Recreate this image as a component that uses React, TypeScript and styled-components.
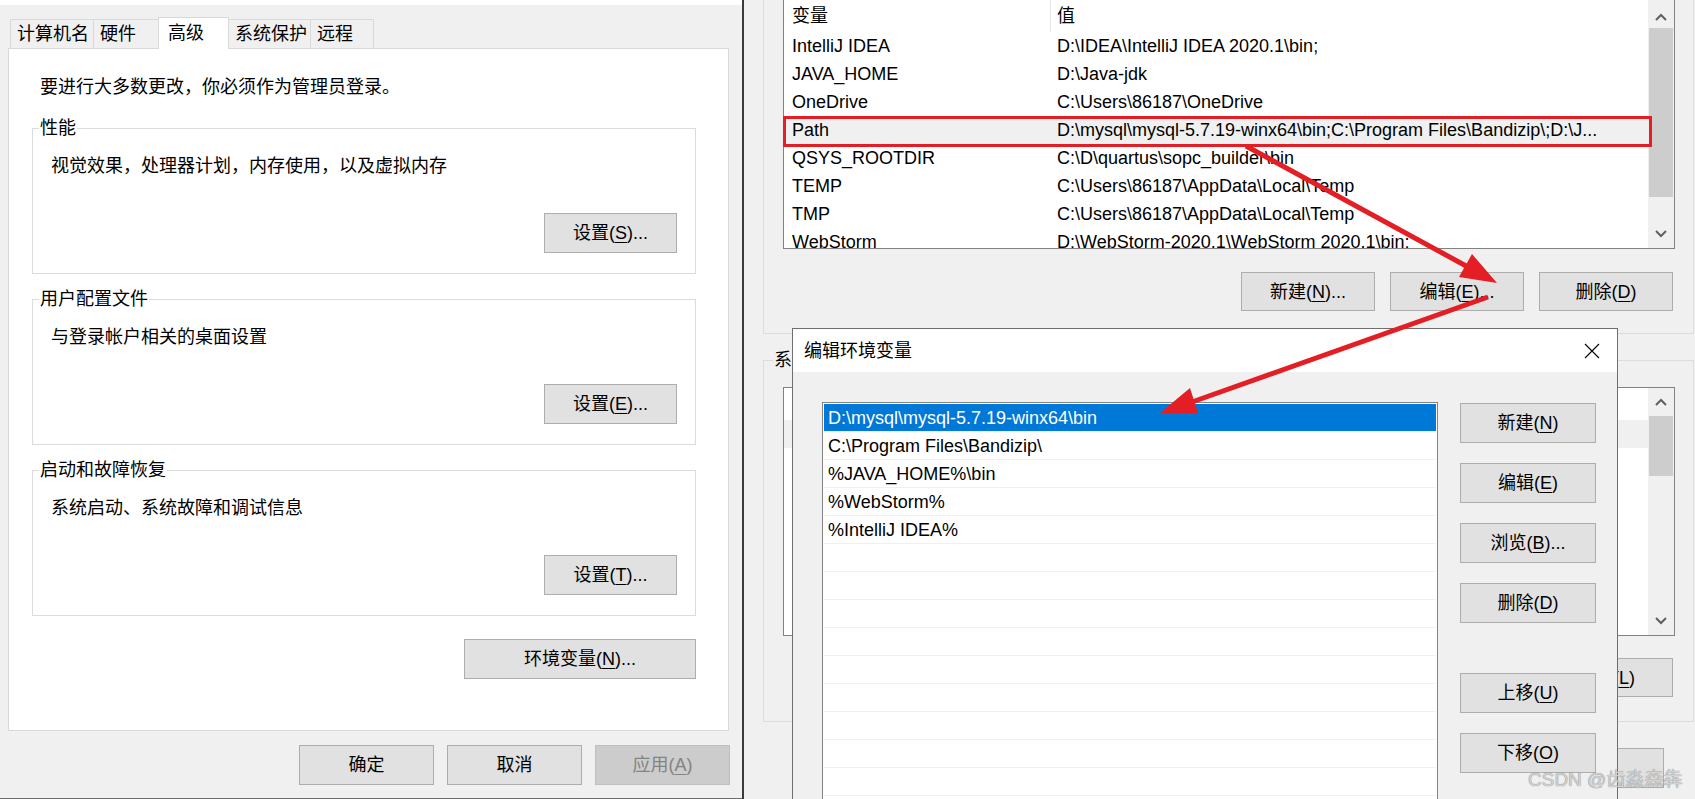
import React from "react";
import styled, { createGlobalStyle } from "styled-components";

const GlobalStyle = createGlobalStyle`
  html, body { margin: 0; padding: 0; }
  body {
    width: 1695px; height: 799px; overflow: hidden; background: #f0f0f0;
    font-family: "Liberation Sans", "Noto Sans CJK SC", sans-serif;
    font-size: 18px; line-height: 24px; color: #000;
  }
  #root { width: 1695px; height: 799px; }
`;

const Screen = styled.div`
  position: relative;
  display: flex;
  width: 1695px;
  height: 799px;
  overflow: hidden;
`;

/* ---------- shared ---------- */
const Btn = styled.button<{ $w?: number; $h?: number; $disabled?: boolean; $gapTop?: number }>`
  box-sizing: border-box;
  flex: none;
  width: ${(p) => p.$w ?? 133}px;
  height: ${(p) => p.$h ?? 40}px;
  margin: ${(p) => (p.$gapTop ? `${p.$gapTop}px 0 0 0` : "0")};
  padding: 0;
  font: inherit;
  line-height: 24px;
  color: ${(p) => (p.$disabled ? "#838383" : "#000")};
  background: ${(p) => (p.$disabled ? "#cccccc" : "#e1e1e1")};
  border: 1px solid ${(p) => (p.$disabled ? "#bfbfbf" : "#adadad")};
  border-radius: 0;
  display: flex;
  align-items: center;
  justify-content: center;
  white-space: nowrap;
  u { text-underline-offset: 3px; text-decoration-thickness: 1px; }
`;

const Legend = styled.div<{ $bg: string; $left: number }>`
  align-self: flex-start;
  margin: -13px 0 0 ${(p) => p.$left}px;
  padding: 0 1px;
  background: ${(p) => p.$bg};
  line-height: 24px;
  white-space: nowrap;
`;

/* ---------- left window ---------- */
const LeftWindow = styled.section`
  box-sizing: border-box;
  width: 742px;
  height: 799px;
  flex: none;
  background: #f0f0f0;
  border-top: 5px solid #ffffff;
  border-bottom: 1px solid #6d6d6d;
  display: flex;
  flex-direction: column;
`;

const Divider = styled.div`
  width: 2px;
  flex: none;
  background: #3a3a3a;
`;

const TabStrip = styled.div`
  display: flex;
  align-items: flex-end;
  height: 31px;
  margin-top: 12px;
  padding-left: 10px;
`;

const Tab = styled.div<{ $w: number; $active?: boolean }>`
  box-sizing: border-box;
  width: ${(p) => p.$w}px;
  height: ${(p) => (p.$active ? 32 : 29)}px;
  margin: 0 -1px ${(p) => (p.$active ? -1 : 0)}px 0;
  padding-left: ${(p) => (p.$active ? 9 : 6)}px;
  padding-bottom: ${(p) => (p.$active ? 1 : 0)}px;
  position: relative;
  z-index: ${(p) => (p.$active ? 2 : 1)};
  border: 1px solid #d9d9d9;
  border-bottom: none;
  background: ${(p) => (p.$active ? "#ffffff" : "#f0f0f0")};
  display: flex;
  align-items: center;
  white-space: nowrap;
`;

const Panel = styled.div`
  box-sizing: border-box;
  margin-left: 8px;
  width: 721px;
  height: 683px;
  flex: none;
  border: 1px solid #d9d9d9;
  background: #ffffff;
  padding: 0 32px 0 23px;
  display: flex;
  flex-direction: column;
`;

const Intro = styled.div`
  margin: 26px 0 0 8px;
  line-height: 24px;
`;

const SettingGroup = styled.div<{ $first?: boolean }>`
  box-sizing: border-box;
  height: 146px;
  margin-top: ${(p) => (p.$first ? 29 : 25)}px;
  border: 1px solid #dcdcdc;
  padding: 0 18px 20px 18px;
  display: flex;
  flex-direction: column;
`;

const GroupDesc = styled.div`
  margin-top: 14px;
  line-height: 24px;
`;

const GroupAction = styled.div`
  margin-top: auto;
  align-self: flex-end;
`;

const EnvRow = styled.div`
  margin-top: 23px;
  display: flex;
  justify-content: flex-end;
`;

const LeftFooter = styled.div`
  margin-top: 14px;
  display: flex;
  justify-content: flex-end;
  gap: 13px;
  padding-right: 12px;
`;

/* ---------- right window ---------- */
const RightWindow = styled.section`
  flex: 1;
  min-width: 0;
  background: #f0f0f0;
  display: flex;
  flex-direction: column;
  padding: 0 1px 0 19px;
`;

const VarGroup = styled.div<{ $top: number; $pt: number; $pb: number }>`
  box-sizing: border-box;
  margin-top: ${(p) => p.$top}px;
  border: 1px solid #dcdcdc;
  padding: ${(p) => p.$pt}px 18px ${(p) => p.$pb}px 19px;
  display: flex;
  flex-direction: column;
`;

const ListView = styled.div<{ $h: number; $mt?: number }>`
  box-sizing: border-box;
  height: ${(p) => p.$h}px;
  margin-top: ${(p) => p.$mt ?? 0}px;
  border: 1px solid #828282;
  background: #ffffff;
  display: flex;
  overflow: hidden;
`;

const ListBody = styled.div`
  flex: 1;
  min-width: 0;
  display: flex;
  flex-direction: column;
`;

const ListRow = styled.div<{ $h?: number; $hl?: boolean }>`
  display: flex;
  flex: none;
  height: ${(p) => p.$h ?? 28}px;
  background: ${(p) => (p.$hl ? "#f0f0f0" : "transparent")};
  line-height: ${(p) => p.$h ?? 28}px;
  white-space: nowrap;
`;

const NameCell = styled.div<{ $head?: boolean }>`
  box-sizing: border-box;
  width: 267px;
  flex: none;
  padding-left: 8px;
  border-right: 1px solid ${(p) => (p.$head ? "#e5e5e5" : "transparent")};
  overflow: hidden;
`;

const ValueCell = styled.div`
  flex: 1;
  min-width: 0;
  padding-left: 6px;
  overflow: hidden;
`;

const ScrollBar = styled.div`
  width: 26px;
  flex: none;
  background: #f0f0f0;
  display: flex;
  flex-direction: column;
`;

const ScrollArrow = styled.div<{ $pt?: number }>`
  height: 28px;
  flex: none;
  display: flex;
  justify-content: center;
  align-items: center;
  padding-top: ${(p) => p.$pt ?? 0}px;
  box-sizing: border-box;
`;

const Thumb = styled.div<{ $h: number }>`
  height: ${(p) => p.$h}px;
  margin: 0 1px;
  flex: none;
  background: #cdcdcd;
`;

const Track = styled.div`
  flex: 1;
`;

const ButtonRow = styled.div<{ $mt: number; $pr: number }>`
  display: flex;
  justify-content: flex-end;
  gap: 15px;
  margin-top: ${(p) => p.$mt}px;
  padding-right: ${(p) => p.$pr}px;
`;

/* ---------- overlays ---------- */
const RedFrame = styled.div`
  position: absolute;
  left: 783px;
  top: 116px;
  width: 869px;
  height: 31px;
  box-sizing: border-box;
  border: 3px solid #e31e24;
  z-index: 5;
`;

const EditDialog = styled.section`
  position: absolute;
  left: 792px;
  top: 328px;
  width: 826px;
  height: 490px;
  box-sizing: border-box;
  border: 1px solid #6e6e6e;
  background: #f0f0f0;
  display: flex;
  flex-direction: column;
  z-index: 10;
`;

const TitleBar = styled.div`
  height: 43px;
  flex: none;
  background: #ffffff;
  display: flex;
  align-items: center;
  justify-content: space-between;
  padding: 0 17px 0 11px;
`;

const DialogBody = styled.div`
  display: flex;
  gap: 22px;
  padding: 30px 21px 0 29px;
`;

const PathList = styled.div`
  box-sizing: border-box;
  width: 616px;
  height: 420px;
  flex: none;
  border: 1px solid #828282;
  background: #ffffff;
  padding: 1px;
  display: flex;
  flex-direction: column;
`;

const PathRow = styled.div<{ $sel?: boolean }>`
  height: 28px;
  flex: none;
  box-sizing: border-box;
  border-bottom: 1px solid #f0f0f0;
  background: ${(p) => (p.$sel ? "#0078d7" : "#ffffff")};
  color: ${(p) => (p.$sel ? "#ffffff" : "#000000")};
  padding: 2px 0 0 4px;
  line-height: 25px;
  white-space: nowrap;
`;

const DialogButtons = styled.div`
  display: flex;
  flex-direction: column;
  gap: 20px;
  padding-top: 1px;
`;

const Watermark = styled.div`
  position: absolute;
  left: 1528px;
  top: 767px;
  font-size: 19px;
  line-height: 26px;
  color: #d2d2d2;
  text-shadow: 0 0 1px #6a6a6a;
  white-space: nowrap;
  z-index: 20;
`;

const ArrowLayer = styled.svg`
  position: absolute;
  left: 0;
  top: 0;
  width: 1695px;
  height: 799px;
  pointer-events: none;
  z-index: 15;
`;

/* ---------- icons ---------- */
const ChevronUp = () => (
  <svg width="12" height="8" viewBox="0 0 12 8">
    <polyline points="1,7 6,2 11,7" fill="none" stroke="#606060" strokeWidth="2" />
  </svg>
);
const ChevronDown = () => (
  <svg width="12" height="8" viewBox="0 0 12 8">
    <polyline points="1,1 6,6 11,1" fill="none" stroke="#606060" strokeWidth="2" />
  </svg>
);
const CloseX = () => (
  <svg width="16" height="16" viewBox="0 0 16 16">
    <path d="M1 1 L15 15 M15 1 L1 15" stroke="#000" strokeWidth="1.1" fill="none" />
  </svg>
);

/* ---------- data ---------- */
const tabs = [
  { label: "计算机名", w: 84 },
  { label: "硬件", w: 66 },
  { label: "高级", w: 71, active: true },
  { label: "系统保护", w: 83 },
  { label: "远程", w: 64 },
];

const userVars: [string, string][] = [
  ["IntelliJ IDEA", "D:\\IDEA\\IntelliJ IDEA 2020.1\\bin;"],
  ["JAVA_HOME", "D:\\Java-jdk"],
  ["OneDrive", "C:\\Users\\86187\\OneDrive"],
  ["Path", "D:\\mysql\\mysql-5.7.19-winx64\\bin;C:\\Program Files\\Bandizip\\;D:\\J..."],
  ["QSYS_ROOTDIR", "C:\\D\\quartus\\sopc_builder\\bin"],
  ["TEMP", "C:\\Users\\86187\\AppData\\Local\\Temp"],
  ["TMP", "C:\\Users\\86187\\AppData\\Local\\Temp"],
  ["WebStorm", "D:\\WebStorm-2020.1\\WebStorm 2020.1\\bin;"],
];

/* only the edge of the system list shows beside the dialog */
const sysVars: [string, string][] = [
  ["ComSpec", ""],
  ["", ""],
  ["", ""],
  ["", ""],
  ["", ""],
  ["", ""],
  ["", ""],
];

const paths = [
  "D:\\mysql\\mysql-5.7.19-winx64\\bin",
  "C:\\Program Files\\Bandizip\\",
  "%JAVA_HOME%\\bin",
  "%WebStorm%",
  "%IntelliJ IDEA%",
];

const groups = [
  { title: "性能", desc: "视觉效果，处理器计划，内存使用，以及虚拟内存", key: "S" },
  { title: "用户配置文件", desc: "与登录帐户相关的桌面设置", key: "E" },
  { title: "启动和故障恢复", desc: "系统启动、系统故障和调试信息", key: "T" },
];

const Key = ({ k }: { k: string }) => (
  <>
    (<u>{k}</u>)
  </>
);

const VarList = ({
  rows,
  height,
  mt,
  thumb,
  hlIndex,
  upPad,
}: {
  rows: [string, string][];
  height: number;
  mt?: number;
  thumb: number;
  hlIndex: number;
  upPad?: number;
}) => (
  <ListView $h={height} $mt={mt}>
    <ListBody>
      <ListRow $h={32}>
        <NameCell $head>变量</NameCell>
        <ValueCell>值</ValueCell>
      </ListRow>
      {rows.map(([n, v], i) => (
        <ListRow key={"r" + i} $hl={i === hlIndex}>
          <NameCell>{n}</NameCell>
          <ValueCell>{v}</ValueCell>
        </ListRow>
      ))}
    </ListBody>
    <ScrollBar>
      <ScrollArrow $pt={upPad}>
        <ChevronUp />
      </ScrollArrow>
      <Thumb $h={thumb} />
      <Track />
      <ScrollArrow>
        <ChevronDown />
      </ScrollArrow>
    </ScrollBar>
  </ListView>
);

export default function App() {
  const emptyRows = Array.from({ length: 11 });
  return (
    <>
      <GlobalStyle />
      <Screen>
        <LeftWindow>
          <TabStrip>
            {tabs.map((t) => (
              <Tab key={t.label} $w={t.w} $active={t.active}>
                {t.label}
              </Tab>
            ))}
          </TabStrip>
          <Panel>
            <Intro>要进行大多数更改，你必须作为管理员登录。</Intro>
            {groups.map((g, i) => (
              <SettingGroup key={g.title} $first={i === 0}>
                <Legend $bg="#ffffff" $left={-12}>
                  {g.title}
                </Legend>
                <GroupDesc>{g.desc}</GroupDesc>
                <GroupAction>
                  <Btn $w={133}>
                    设置<Key k={g.key} />...
                  </Btn>
                </GroupAction>
              </SettingGroup>
            ))}
            <EnvRow>
              <Btn $w={232}>
                环境变量<Key k="N" />...
              </Btn>
            </EnvRow>
          </Panel>
          <LeftFooter>
            <Btn $w={135}>确定</Btn>
            <Btn $w={135}>取消</Btn>
            <Btn $w={135} $disabled>
              应用<Key k="A" />
            </Btn>
          </LeftFooter>
        </LeftWindow>

        <Divider />

        <RightWindow>
          <VarGroup $top={-30} $pt={28} $pb={22}>
            <VarList rows={userVars} height={250} thumb={169} hlIndex={3} upPad={5} />
            <ButtonRow $mt={23} $pr={2}>
              <Btn $w={134} $h={39}>
                新建<Key k="N" />...
              </Btn>
              <Btn $w={134} $h={39}>
                编辑<Key k="E" />...
              </Btn>
              <Btn $w={134} $h={39}>
                删除<Key k="D" />
              </Btn>
            </ButtonRow>
          </VarGroup>

          <VarGroup $top={26} $pt={0} $pb={24}>
            <Legend $bg="#f0f0f0" $left={-10}>
              系统变量<Key k="S" />
            </Legend>
            <VarList rows={sysVars} height={249} mt={15} thumb={60} hlIndex={0} />
            <ButtonRow $mt={22} $pr={2}>
              <Btn $w={134} $h={39}>
                新建<Key k="W" />...
              </Btn>
              <Btn $w={134} $h={39}>
                编辑<Key k="I" />...
              </Btn>
              <Btn $w={134} $h={39}>
                删除<Key k="L" />
              </Btn>
            </ButtonRow>
          </VarGroup>

          <ButtonRow $mt={26} $pr={30}>
            <Btn $w={134} $h={40}>确定</Btn>
            <Btn $w={134} $h={40}>取消</Btn>
          </ButtonRow>
        </RightWindow>

        <RedFrame />

        <EditDialog>
          <TitleBar>
            <span>编辑环境变量</span>
            <CloseX />
          </TitleBar>
          <DialogBody>
            <PathList>
              {paths.map((p, i) => (
                <PathRow key={p} $sel={i === 0}>
                  {p}
                </PathRow>
              ))}
              {emptyRows.map((_, i) => (
                <PathRow key={"e" + i} />
              ))}
            </PathList>
            <DialogButtons>
              <Btn $w={136}>
                新建<Key k="N" />
              </Btn>
              <Btn $w={136}>
                编辑<Key k="E" />
              </Btn>
              <Btn $w={136}>
                浏览<Key k="B" />...
              </Btn>
              <Btn $w={136}>
                删除<Key k="D" />
              </Btn>
              <Btn $w={136} $gapTop={30}>
                上移<Key k="U" />
              </Btn>
              <Btn $w={136}>
                下移<Key k="O" />
              </Btn>
            </DialogButtons>
          </DialogBody>
        </EditDialog>

        <ArrowLayer viewBox="0 0 1695 799">
          <line x1="1246" y1="146" x2="1468" y2="267" stroke="#e31e24" strokeWidth="5" />
          <polygon points="1497,283 1459,277 1472,254" fill="#e31e24" />
          <line x1="1488" y1="297" x2="1192" y2="402" stroke="#e31e24" strokeWidth="5" />
          <polygon points="1160,413 1190,388 1198,413" fill="#e31e24" />
        </ArrowLayer>

        <Watermark>CSDN @齿淼森犇</Watermark>
      </Screen>
    </>
  );
}
